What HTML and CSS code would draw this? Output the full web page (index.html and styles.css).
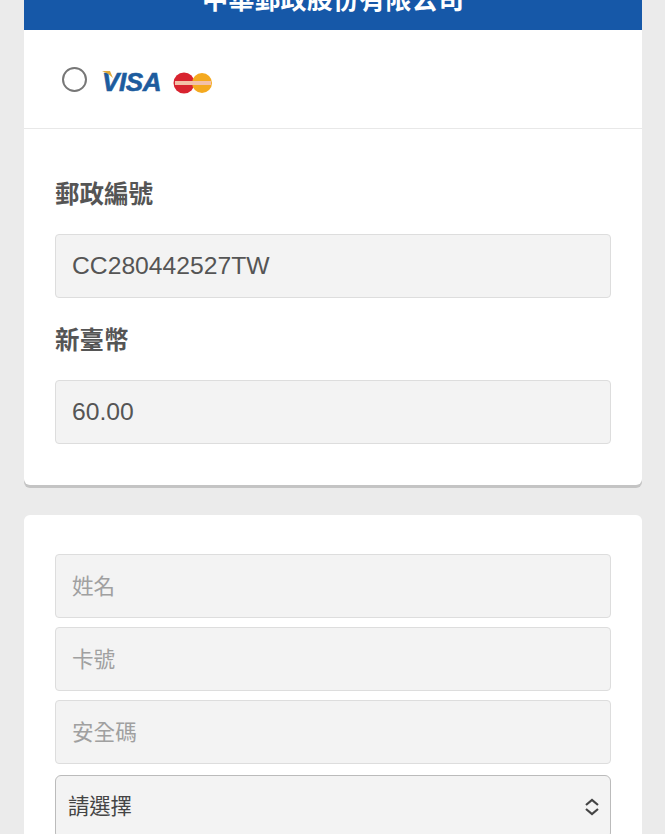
FILE: index.html
```html
<!DOCTYPE html>
<html>
<head>
<meta charset="utf-8">
<link rel="stylesheet" href="styles.css">
</head>
<body>
<main class="page">
    <section class="card">
        <h1 class="card-title">中華郵政股份有限公司</h1>
        <div class="pay-method">
            <span class="radio"></span>
            <span class="visa">VISA<svg class="visa-wing" width="11" height="8" viewBox="0 0 11 8"><path d="M0 0 L8 0 L11 7 Q6 2 0 0 Z" fill="#e0a93c"/></svg></span>
            <svg class="mastercard" width="40" height="24" viewBox="0 0 40 24">
                <circle cx="11" cy="12" r="10.5" fill="#d8232f"/>
                <circle cx="29" cy="12" r="10" fill="#f4a91f"/>
                <rect x="2" y="10" width="36" height="4" fill="#f3c0a8"/>
            </svg>
        </div>
        <div class="fields">
            <label class="label">郵政編號</label>
            <div class="input">CC280442527TW</div>
            <label class="label label-next">新臺幣</label>
            <div class="input">60.00</div>
        </div>
    </section>
    <section class="card card-form">
        <div class="input placeholder">姓名</div>
        <div class="input placeholder">卡號</div>
        <div class="input placeholder">安全碼</div>
        <div class="select">
            <span class="select-text">請選擇</span>
            <svg width="16" height="18" viewBox="0 0 16 18" fill="none" stroke="#444" stroke-width="2.2">
                <path d="M2 7 L8 2 L14 7"/>
                <path d="M2 11 L8 16 L14 11"/>
            </svg>
        </div>
    </section>
</main>
</body>
</html>
```

FILE: styles.css
```css
html, body {
    margin: 0;
    padding: 0;
    height: 834px;
    overflow: hidden;
    background: #ebebeb;
}

body {
    font-family: "Liberation Sans", "Noto Sans CJK TC", sans-serif;
    color: #555;
}

.page {
    display: flex;
    flex-direction: column;
    gap: 30px;
    padding: 0 23px 0 24px;
}

.card {
    background: #fff;
    border-radius: 0 0 6px 6px;
    box-shadow: 0 3px 0 #c4c4c4;
}

.card-title {
    margin: -15px 0 0;
    padding: 0 0 14px;
    height: 31px;
    line-height: 31px;
    background: #1658a8;
    color: #fff;
    font-size: 26.2px;
    font-weight: 700;
    text-align: center;
}

.pay-method {
    display: flex;
    align-items: center;
    height: 99px;
    padding-left: 38px;
    border-bottom: 1px solid #e8e8e8;
    box-sizing: border-box;
}

.radio {
    width: 21px;
    height: 21px;
    margin-top: 0;
    border: 2px solid #777;
    border-radius: 50%;
}

.visa {
    position: relative;
    margin-top: 6px;
    margin-left: 15px;
    color: #1d5c9e;
    font-size: 26px;
    font-weight: 700;
    font-style: italic;
    letter-spacing: -0.4px;
    -webkit-text-stroke: 0.6px #1d5c9e;
}

.visa-wing {
    position: absolute;
    left: 0;
    top: 4px;
}

.mastercard {
    margin-left: 12px;
    margin-top: 7px;
}

.fields {
    padding: 49px 31px 41px;
}

.label {
    display: block;
    height: 33px;
    margin-bottom: 23px;
    font-size: 24.5px;
    line-height: 33px;
    font-weight: 700;
}

.label-next {
    margin-bottom: 23px;
    margin-top: 26px;
}

.input {
    display: flex;
    align-items: center;
    height: 64px;
    padding: 0 16px;
    box-sizing: border-box;
    background: #f3f3f3;
    border: 1px solid #ddd;
    border-radius: 4px;
    font-size: 24.7px;
}

.card-form {
    display: flex;
    flex-direction: column;
    gap: 9px;
    padding: 39px 31px 60px;
    border-radius: 6px;
    box-shadow: none;
}

.input.placeholder {
    padding-bottom: 3px;
    color: #a0a0a0;
    font-size: 21.6px;
}

.select {
    display: flex;
    align-items: center;
    justify-content: space-between;
    height: 64px;
    margin-top: 2px;
    padding: 0 10px 0 12px;
    box-sizing: border-box;
    background: #f3f3f3;
    border: 1px solid #bbb;
    border-radius: 6px;
    font-size: 21.3px;
    color: #444;
}

.select-text {
    margin-top: -5px;
}
```
